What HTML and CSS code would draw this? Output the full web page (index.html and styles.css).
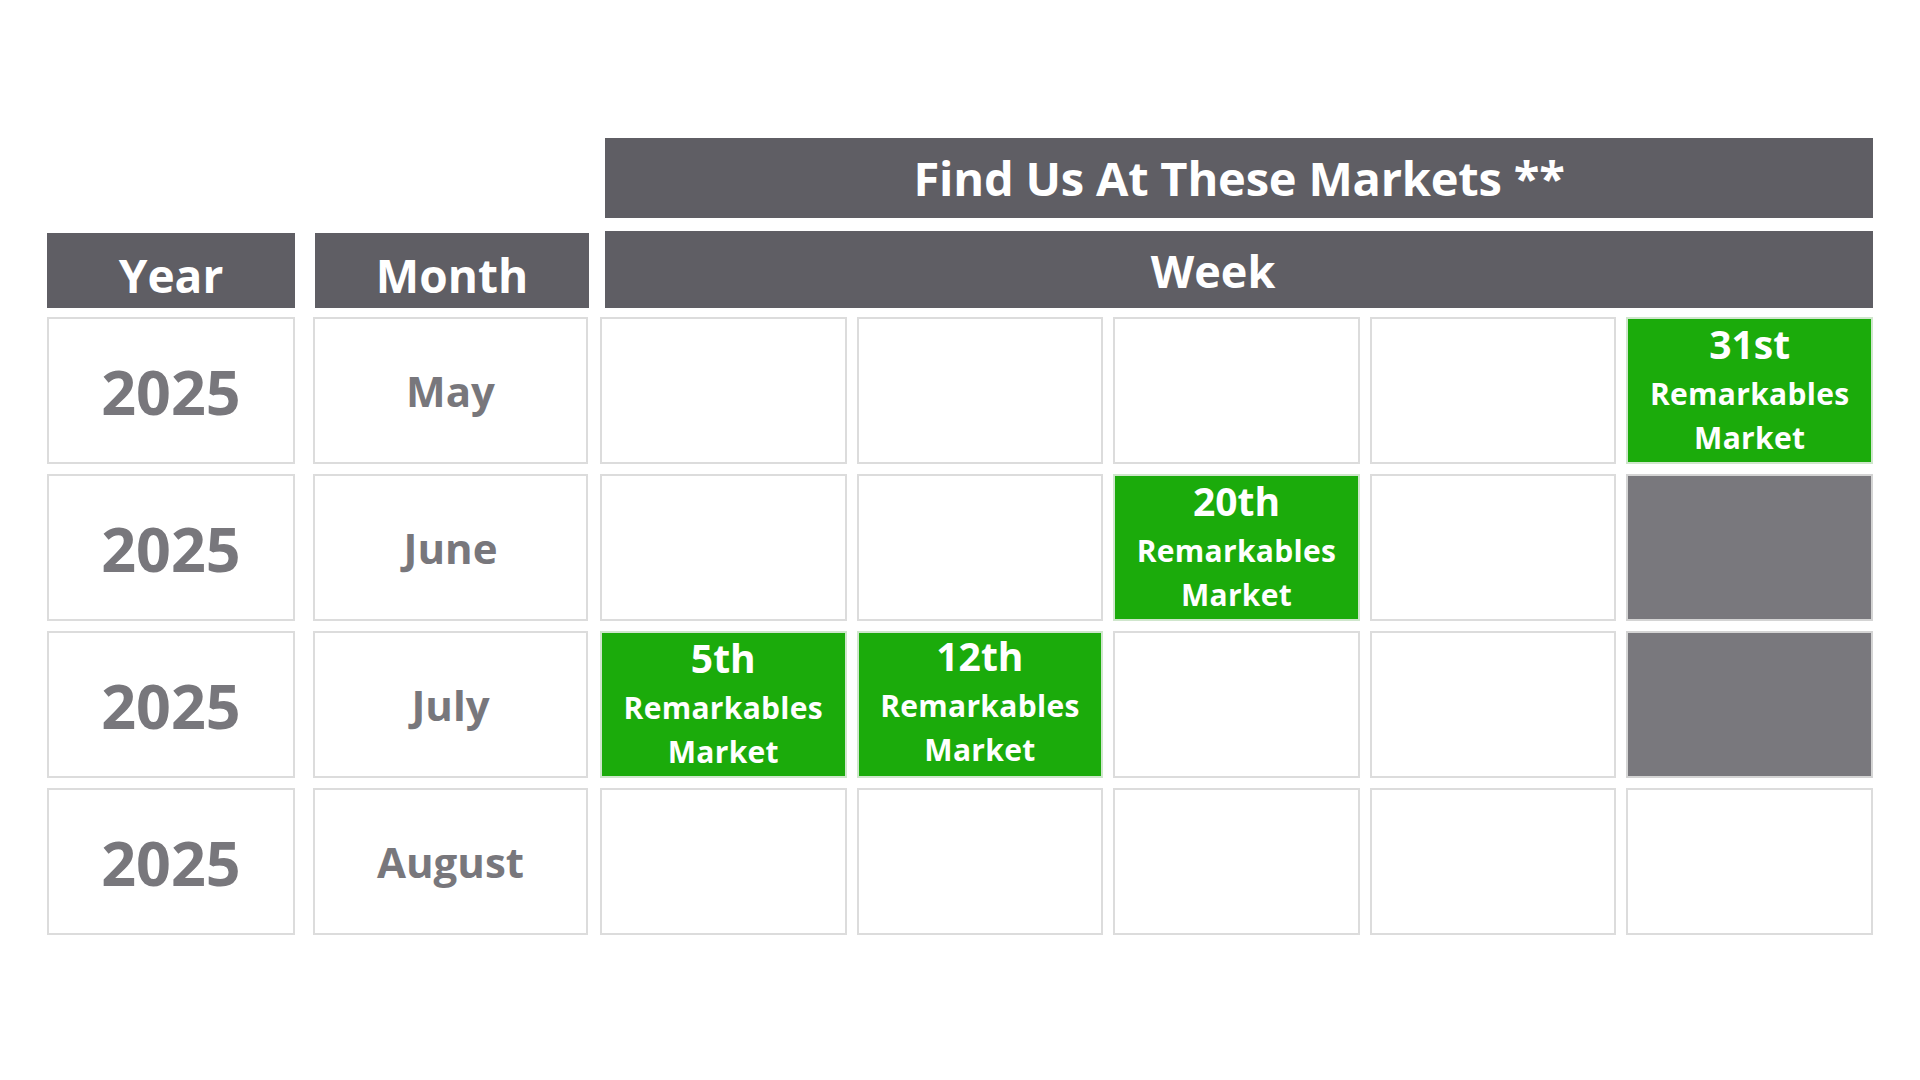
FILE: index.html
```html
<!DOCTYPE html>
<html lang="en">
<head>
<meta charset="utf-8">
<title>Find Us At These Markets</title>
<link rel="stylesheet" href="styles.css">
</head>
<body>
<main class="schedule">
  <div class="title-row">
    <div class="title-bar">Find Us At These Markets **</div>
  </div>
  <div class="head-row">
    <div class="head head-year">Year</div>
    <div class="head head-month">Month</div>
    <div class="head head-week">Week</div>
  </div>

  <div class="row">
    <div class="cell year">2025</div>
    <div class="cell month">May</div>
    <div class="weeks">
      <div class="cell"></div>
      <div class="cell"></div>
      <div class="cell"></div>
      <div class="cell"></div>
      <div class="cell market"><span class="day">31st</span><span class="line">Remarkables</span><span class="line">Market</span></div>
    </div>
  </div>

  <div class="row">
    <div class="cell year">2025</div>
    <div class="cell month">June</div>
    <div class="weeks">
      <div class="cell"></div>
      <div class="cell"></div>
      <div class="cell market"><span class="day">20th</span><span class="line">Remarkables</span><span class="line">Market</span></div>
      <div class="cell"></div>
      <div class="cell off"></div>
    </div>
  </div>

  <div class="row">
    <div class="cell year">2025</div>
    <div class="cell month">July</div>
    <div class="weeks">
      <div class="cell market"><span class="day">5th</span><span class="line">Remarkables</span><span class="line">Market</span></div>
      <div class="cell market raised"><span class="day">12th</span><span class="line">Remarkables</span><span class="line">Market</span></div>
      <div class="cell"></div>
      <div class="cell"></div>
      <div class="cell off"></div>
    </div>
  </div>

  <div class="row">
    <div class="cell year">2025</div>
    <div class="cell month">August</div>
    <div class="weeks">
      <div class="cell"></div>
      <div class="cell"></div>
      <div class="cell"></div>
      <div class="cell"></div>
      <div class="cell"></div>
    </div>
  </div>
</main>
</body>
</html>
```

FILE: styles.css
```css
* { box-sizing: border-box; }

html, body {
  margin: 0;
  padding: 0;
  background: #ffffff;
}

body {
  font-family: "Open Sans", "Noto Sans", "Liberation Sans", sans-serif;
  font-weight: 700;
  width: 1920px;
  height: 1080px;
  overflow: hidden;
}

.schedule {
  padding: 138px 0 0 47px;
  display: flex;
  flex-direction: column;
}

.title-row {
  display: flex;
  padding-left: 558px;
  margin-bottom: 13px;
}

.title-bar {
  width: 1268px;
  height: 80px;
  background: #5f5e64;
  color: #ffffff;
  font-size: 47px;
  line-height: 80px;
  text-align: center;
  letter-spacing: -0.2px;
}

.head-row {
  display: flex;
  align-items: flex-end;
  margin-bottom: 9px;
}

.head {
  background: #5f5e64;
  color: #ffffff;
  font-size: 46px;
  text-align: center;
}

.head-year {
  width: 248px;
  height: 75px;
  line-height: 84px;
  margin-right: 20px;
}

.head-month {
  width: 274px;
  height: 75px;
  line-height: 84px;
  margin-right: 16px;
}

.head-week {
  width: 1268px;
  height: 77px;
  line-height: 80px;
  padding-right: 52px;
  font-size: 45px;
}

.row {
  display: flex;
  height: 147px;
  margin-bottom: 10px;
}

.cell {
  border: 2px solid #dcdcdc;
  background: #ffffff;
  color: #78777c;
  display: flex;
  align-items: center;
  justify-content: center;
}

.year {
  width: 248px;
  margin-right: 18px;
  font-size: 61px;
  padding-top: 2px;
}

.month {
  width: 275px;
  margin-right: 12px;
  font-size: 42px;
}

.weeks {
  width: 1273px;
  display: grid;
  grid-template-columns: repeat(5, 1fr);
  column-gap: 10px;
}

.weeks .cell {
  height: 147px;
}

.market {
  background: #1bab0b;
  border-color: #cfe6cc;
  color: #ffffff;
  flex-direction: column;
  justify-content: center;
  text-align: center;
  padding-bottom: 5px;
}

.market .day {
  font-size: 39px;
  line-height: 56px;
}

.market .line {
  font-size: 30px;
  line-height: 44px;
  letter-spacing: 0.3px;
}

.market.raised {
  padding-bottom: 10px;
}

.off {
  background: #79787d;
  border-color: #d4d4d4;
}
```
